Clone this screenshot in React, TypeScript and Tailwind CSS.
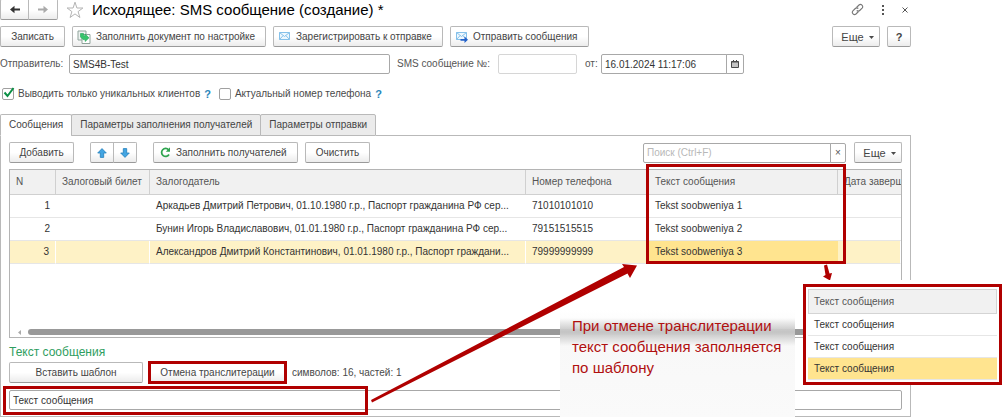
import type { ReactNode } from 'react';
import { clsx } from 'clsx';

interface Recipient {
  n: number;
  pledger: string;
  phone: string;
  text: string;
}

const recipients: Recipient[] = [
  { n: 1, pledger: 'Аркадьев Дмитрий Петрович, 01.10.1980 г.р., Паспорт гражданина РФ сер...', phone: '71010101010', text: 'Tekst soobweniya 1' },
  { n: 2, pledger: 'Бунин Игорь Владиславович, 01.01.1980 г.р., Паспорт гражданина РФ сер...', phone: '79151515515', text: 'Tekst soobweniya 2' },
  { n: 3, pledger: 'Александров Дмитрий Константинович, 01.01.1980 г.р., Паспорт граждани...', phone: '79999999999', text: 'Tekst soobweniya 3' },
];

const tabs = ['Сообщения', 'Параметры заполнения получателей', 'Параметры отправки'];

const previewRows = ['Текст сообщения', 'Текст сообщения', 'Текст сообщения'];

const buttonBase =
  'flex items-center h-[21px] shrink-0 border border-[#b9b9b9] border-b-[#9a9a9a] rounded-xs bg-linear-to-b from-white from-50% to-[#ececec] text-[#444] whitespace-nowrap';

const fieldBase = 'h-[20px] border border-[#a8a8a8] rounded-xs bg-white px-[3px] text-[#333] outline-none';

interface ButtonProps {
  className?: string;
  label?: string;
  start?: boolean;
  children: ReactNode;
}

function Button({ className, label, start, children }: ButtonProps) {
  return (
    <button type="button" aria-label={label} className={clsx(buttonBase, start ? 'justify-start' : 'justify-center', className)}>
      {children}
    </button>
  );
}

function Caret() {
  return (
    <svg width="5" height="3" viewBox="0 0 5 3" className="mt-px shrink-0">
      <path d="M0 0h5L2.5 3z" fill="#4a4a4a" />
    </svg>
  );
}

function NavArrow({ color, flip }: { color: string; flip?: boolean }) {
  return (
    <svg width="12" height="9" viewBox="0 0 12 9" className={clsx('shrink-0', flip && 'rotate-180')}>
      <path d="M1 4.5 5.5.8v2.700H11v2H5.500v2.700z" fill={color} />
    </svg>
  );
}

function StarIcon() {
  return (
    <svg width="18" height="18" viewBox="0 0 18 18">
      <path d="M9 1.2 10.9 7h6l-4.800 3.600 1.800 5.900L9 12.900l-4.900 3.600 1.800-5.900L1.100 7h6z" fill="#fff" stroke="#b4b4b4" />
    </svg>
  );
}

function FillIcon() {
  return (
    <svg width="14" height="14" viewBox="0 0 14 14" className="shrink-0">
      <path d="M1 1h8v9H1z" fill="#eef3f1" stroke="#8fa39b" />
      <path d="M5 4.500h8v9H5z" fill="#fff" stroke="#8fa39b" />
      <path d="M3.500 3.500h3v2.200h1.700V4L12 7.800 8.200 11.500V9.600H6L3.500 7z" fill="#35c46a" stroke="#1fa556" strokeWidth=".6" />
    </svg>
  );
}

function MailIcon({ send }: { send?: boolean }) {
  return (
    <svg width="12" height="11" viewBox="0 0 12 11" overflow="visible" className="shrink-0">
      <path d="M.5 1.500h10v7H.5z" fill="#eff8fe" stroke="#85c1ea" />
      <path d="m.5 1.500 5 4 5-4M.5 8.500l3.700-4M10.500 8.500 6.800 4.500" fill="none" stroke="#85c1ea" />
      {send && <path d="M4.500 8h4V5.500L12 8.800 8.500 12V9.800h-4z" fill="#2462c9" />}
    </svg>
  );
}

function MoveArrow({ down }: { down?: boolean }) {
  return (
    <svg width="10" height="10" viewBox="0 0 10 10" className={clsx('shrink-0', down && 'rotate-180')}>
      <path d="M5 .6 9.300 5H6.700v4.400H3.300V5H.7z" fill="#43a5e2" stroke="#2380bd" strokeWidth=".8" />
    </svg>
  );
}

function RefreshIcon() {
  return (
    <svg width="11" height="11" viewBox="0 0 11 11" className="shrink-0">
      <path d="M8.600 2.800A4 4 0 1 0 9 7.600" fill="none" stroke="#2fa44f" strokeWidth="1.800" />
      <path d="M10 .3v4.400H5.800z" fill="#2fa44f" />
    </svg>
  );
}

function LinkIcon() {
  return (
    <svg width="13" height="13" viewBox="0 0 13 13" fill="none" stroke="#777" strokeWidth="1.100">
      <path d="M5.500 4.500 8 2a2.200 2.200 0 0 1 3.100 3.100L8.700 7.500a2.100 2.100 0 0 1-3 0" />
      <path d="M7.500 8.500 5 11a2.200 2.200 0 0 1-3.100-3.100l2.400-2.400a2.100 2.100 0 0 1 3 0" />
    </svg>
  );
}

function CalendarIcon() {
  return (
    <svg width="8" height="8" viewBox="0 0 8 8" className="shrink-0">
      <path d="M.5 1.500h7v6h-7z" fill="#c4c4c4" stroke="#4a4a4a" />
      <path d="M.5 2h7M2.500 0v2M5.500 0v2" stroke="#4a4a4a" />
    </svg>
  );
}

function Check({ id, label, checked }: { id: string; label: string; checked?: boolean }) {
  return (
    <div className="flex items-center">
      <div className="relative flex">
        <input id={id} type="checkbox" defaultChecked={checked} className="peer size-3 appearance-none rounded-xs border border-[#a0a0a0] bg-white" />
        <svg width="12" height="11" viewBox="0 0 12 11" className="pointer-events-none absolute -top-px left-px hidden peer-checked:block">
          <path d="m1.500 5.500 3 3.500L10.500 1" fill="none" stroke="#0b8f45" strokeWidth="2" />
        </svg>
      </div>
      <label htmlFor={id} className="ml-1 text-[#4a4a4a]">{label}</label>
      <a href="#help" className="ml-1 text-[11px] font-bold text-[#2a86ba]">?</a>
    </div>
  );
}

function RecipientsTable() {
  const head = 'h-[25px] px-[6px] font-normal text-left whitespace-nowrap overflow-hidden border-b border-[#d0d0d0]';
  return (
    <div className="relative">
      <div className="flex h-[169px] flex-col overflow-hidden border border-[#b4b4b4]">
        <table className="w-full table-fixed border-separate border-spacing-0">
          <colgroup>
            <col className="w-[46px]" />
            <col className="w-[94px]" />
            <col />
            <col className="w-[123px]" />
            <col className="w-[189px]" />
            <col className="w-[63px]" />
          </colgroup>
          <thead className="bg-[#f1f1f1] text-[#555]">
            <tr>
              <th className={clsx(head, 'border-r')}>N</th>
              <th className={clsx(head, 'border-r')}>Залоговый билет</th>
              <th className={clsx(head, 'border-r')}>Залогодатель</th>
              <th className={clsx(head, 'border-r')}>Номер телефона</th>
              <th className={clsx(head, 'border-r')}>Текст сообщения</th>
              <th className={head}>Дата завершения</th>
            </tr>
          </thead>
          <tbody className="text-[#333]">
            {recipients.map((r) => {
              const active = r.n === 3;
              const cell = clsx(
                'h-[23px] px-[6px] border-b border-[#e6e6e6] whitespace-nowrap overflow-hidden',
                active && 'bg-[#fef2c6] border-r border-r-white'
              );
              return (
                <tr key={r.n}>
                  <td className={clsx(cell, 'text-right')}>{r.n}</td>
                  <td className={cell} />
                  <td className={cell}>{r.pledger}</td>
                  <td className={cell}>{r.phone}</td>
                  <td className={clsx('h-[23px] overflow-hidden border-b border-[#e6e6e6] px-[6px] whitespace-nowrap', active && 'bg-[#ffe48f]')}>{r.text}</td>
                  <td className={cell} />
                </tr>
              );
            })}
          </tbody>
        </table>
        <div className="mt-auto mb-[2px] flex items-center gap-[7px] px-2">
          <svg width="3" height="5" viewBox="0 0 3 5">
            <path d="M3 0v5L0 2.500z" fill="#aaa" />
          </svg>
          <div className="h-[6px] flex-1 rounded-full bg-[#999]" />
        </div>
      </div>
      <div className="pointer-events-none absolute -top-[5px] right-[56px] h-[100px] w-[200px] border-3 border-[#b00000]" />
    </div>
  );
}

function MessagesPanel() {
  return (
    <section className="border border-t-0 border-[#b9b9b9] px-2 py-[6px]">
      <div className="flex items-center">
        <Button className="w-[65px]">Добавить</Button>
        <div className="ml-4 flex">
          <Button label="Вверх" className="w-6 rounded-r-none"><MoveArrow /></Button>
          <Button label="Вниз" className="-ml-px w-6 rounded-l-none"><MoveArrow down /></Button>
        </div>
        <Button start className="ml-4 w-[145px] gap-[5px] pl-[6px]"><RefreshIcon />Заполнить получателей</Button>
        <Button className="ml-[7px] w-[65px]">Очистить</Button>
        <div className="ml-auto flex">
          <input aria-label="Поиск" placeholder="Поиск (Ctrl+F)" className={clsx(fieldBase, 'w-[188px] rounded-r-none placeholder:text-[#b8b8b8]')} />
          <button type="button" aria-label="Очистить поиск" className="-ml-px flex h-[20px] w-4 items-center justify-center rounded-r-xs border border-[#a8a8a8] text-[#555]">×</button>
        </div>
        <Button className="ml-2 w-12 gap-[5px] pl-[3px] text-[11px]">Еще<Caret /></Button>
      </div>

      <div className="mt-[6px]">
        <RecipientsTable />
      </div>

      <h2 className="mt-1 text-[12px] leading-5 text-[#2f9e5f]">Текст сообщения</h2>
      <div className="flex items-center">
        <Button className="w-[134px]">Вставить шаблон</Button>
        <div className="relative ml-[5px]">
          <Button className="w-[139px]">Отмена транслитерации</Button>
          <div className="pointer-events-none absolute inset-x-0 -inset-y-px border-3 border-[#b00000]" />
        </div>
        <span className="ml-[5px] text-[#4a4a4a]">символов: 16, частей: 1</span>
      </div>
      <div className="relative mt-[7px] flex">
        <input aria-label="Текст сообщения" defaultValue="Текст сообщения" className={clsx(fieldBase, 'flex-1')} />
        <div className="pointer-events-none absolute -top-[4px] -left-[6px] h-[29px] w-[365px] border-3 border-[#b00000]" />
      </div>
    </section>
  );
}

function Annotations() {
  return (
    <>
      <div className="absolute top-[310px] left-[560px] h-[108px] w-[235px] bg-linear-to-b from-white/0 via-[#f8f8f8] via-25% to-[#fafafa] pt-[5px] pl-3">
        <div className="absolute inset-x-0 top-[8px] h-[28px] bg-linear-to-b from-transparent via-[#c4c4c4] to-transparent" />
        <p className="relative text-[15px] leading-[21px] whitespace-nowrap text-[#b01010]">
          При отмене транслитерации
          <br />
          текст сообщения заполняется
          <br />
          по шаблону
        </p>
      </div>

      <svg width="1002" height="418" viewBox="0 0 1002 418" className="pointer-events-none absolute top-0 left-0">
        <path d="M371 400 624 267 622 264 637 265.500 630 278 627.500 273.500 372 402.500z" fill="#b00000" />
        <path d="M824 265.500 827 264.500 829.500 273.500 832 273 830 280.500 823 276.500 825.500 275z" fill="#b00000" />
      </svg>

      <div className="absolute top-[280px] left-[803px] bg-white pt-1">
        <div className="w-[199px] border-3 border-[#b00000] p-[2px] text-[#333]">
          <div className="flex h-[25px] items-center border border-[#d4d4d4] bg-[#f1f1f1] px-[5px] text-[#555]">Текст сообщения</div>
          {previewRows.map((text, i) => (
            <div key={i} className={clsx('flex h-[22px] items-center border-b border-[#e6e6e6] px-[6px]', i === 2 && 'bg-[#ffe48f]')}>
              {text}
            </div>
          ))}
        </div>
      </div>
    </>
  );
}

export default function App() {
  return (
    <div className="relative overflow-hidden bg-white font-['Liberation_Sans',Arial,sans-serif] text-[10px] leading-4">
      <main className="pr-[91px]">
        <header className="flex h-[19px] items-center">
          <div className="flex">
            <Button label="Назад" className="h-[19px] w-[29px] rounded-r-none"><NavArrow color="#333" /></Button>
            <Button label="Вперед" className="-ml-px h-[19px] w-[30px] rounded-l-none"><NavArrow color="#aaa" flip /></Button>
          </div>
          <button type="button" aria-label="В избранное" className="ml-2"><StarIcon /></button>
          <h1 className="ml-2 text-[15px] leading-5 text-black">Исходящее: SMS сообщение (создание) *</h1>
          <div className="ml-auto flex items-center gap-[18px] text-[#555]">
            <button type="button" aria-label="Ссылка"><LinkIcon /></button>
            <button type="button" aria-label="Меню">
              <svg width="2" height="10" viewBox="0 0 2 10" fill="#555">
                <path d="M0 0h2v2H0zM0 4h2v2H0zM0 8h2v2H0z" />
              </svg>
            </button>
            <button type="button" aria-label="Закрыть" className="mr-[3px]">
              <svg width="6" height="6" viewBox="0 0 6 6">
                <path d="m.5.5 5 5m0-5-5 5" stroke="#555" />
              </svg>
            </button>
          </div>
        </header>

        <div className="mt-[7px] flex items-center gap-[7px]">
          <Button className="w-[65px]">Записать</Button>
          <Button start className="w-[194px] gap-[5px] pl-1"><FillIcon />Заполнить документ по настройке</Button>
          <Button start className="w-[170px] gap-[5px] pl-[5px]"><MailIcon />Зарегистрировать к отправке</Button>
          <Button start className="w-[139px] gap-[5px] pl-[5px]"><MailIcon send />Отправить сообщения</Button>
          <Button className="ml-auto w-12 gap-[5px] pl-[3px] text-[11px]">Еще<Caret /></Button>
          <Button label="Справка" className="w-6 text-[11px] font-bold text-[#222]">?</Button>
        </div>

        <div className="mt-[7px] flex items-center text-[#555]">
          <label htmlFor="sender" className="w-[69px]">Отправитель:</label>
          <input id="sender" defaultValue="SMS4B-Test" className={clsx(fieldBase, 'w-[321px]')} />
          <label htmlFor="number" className="ml-[7px] w-[101px] whitespace-nowrap">SMS сообщение №:</label>
          <input id="number" className={clsx(fieldBase, 'w-[79px] border-[#d6d6d6]')} />
          <label htmlFor="date" className="ml-2 w-4">от:</label>
          <input id="date" defaultValue="16.01.2024 11:17:06" className={clsx(fieldBase, 'w-[126px] rounded-r-none')} />
          <button type="button" aria-label="Выбрать дату" className="-ml-px flex h-[20px] w-[18px] items-center justify-center rounded-r-xs border border-[#a8a8a8]">
            <CalendarIcon />
          </button>
        </div>

        <div className="mt-3 flex items-center gap-2 pl-[2px]">
          <Check id="unique" label="Выводить только уникальных клиентов" checked />
          <Check id="actual" label="Актуальный номер телефона" />
        </div>

        <div role="tablist" className="mt-3 flex h-[22px] items-stretch text-[#444]">
          {tabs.map((tab, i) => (
            <button
              key={tab}
              type="button"
              role="tab"
              aria-selected={i === 0}
              className={clsx(
                'rounded-t-xs border border-[#b9b9b9] px-2 whitespace-nowrap',
                i === 0 ? 'border-b-white bg-white' : '-ml-px bg-[#ebebeb]'
              )}
            >
              {tab}
            </button>
          ))}
          <div className="flex-1 border-b border-[#b9b9b9]" />
        </div>
        <MessagesPanel />
      </main>
      <Annotations />
    </div>
  );
}
